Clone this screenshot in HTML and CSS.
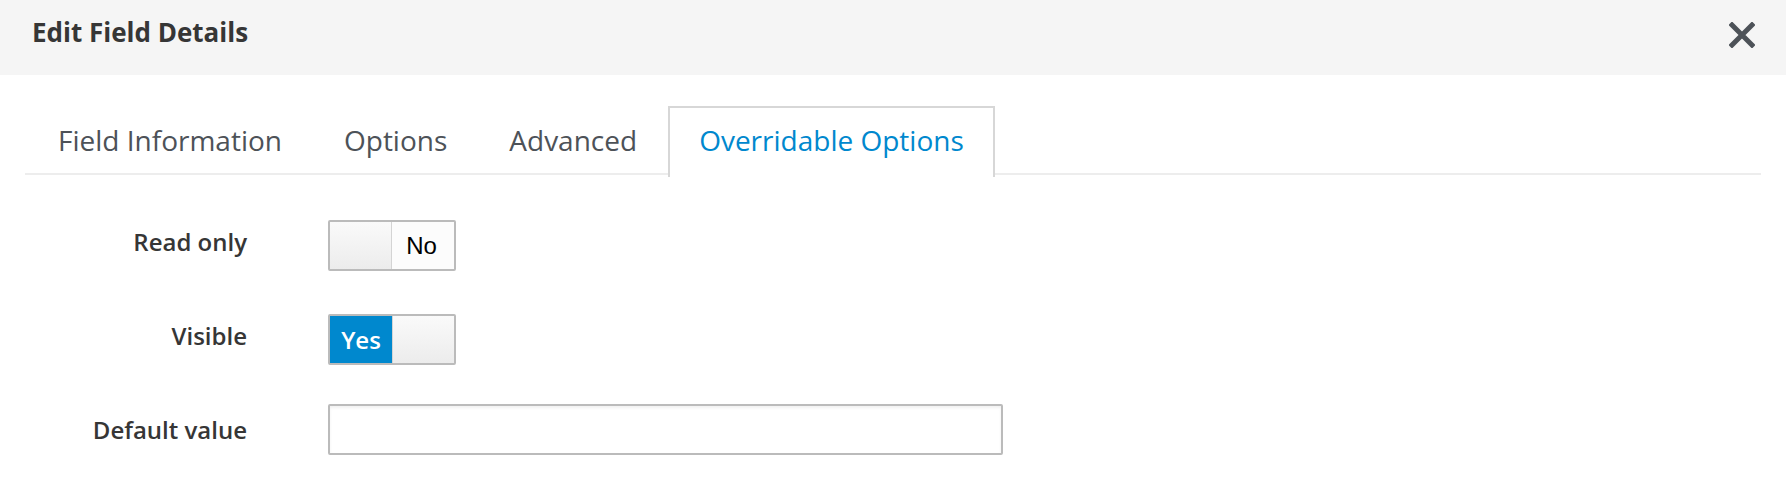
FILE: index.html
```html
<!DOCTYPE html>
<html lang="en">
<head>
<meta charset="utf-8">
<title>Edit Field Details</title>
<link rel="stylesheet" href="styles.css">
</head>
<body>
<div class="modal">
  <div class="modal-header">
    <h4 class="modal-title">Edit Field Details</h4>
    <button class="close" aria-label="Close">
      <svg width="26" height="26" viewBox="0 0 26 26"><path d="M3 3 L23 23 M23 3 L3 23" stroke="#4d5258" stroke-width="5" stroke-linecap="square"/></svg>
    </button>
  </div>
  <div class="modal-body">
    <ul class="nav-tabs">
      <li class="tab">Field Information</li>
      <li class="tab">Options</li>
      <li class="tab">Advanced</li>
      <li class="tab active">Overridable Options</li>
    </ul>
    <div class="form">
      <div class="row row-1">
        <label class="label">Read only</label>
        <div class="switch off">
          <span class="handle"></span>
          <span class="state-no">No</span>
        </div>
      </div>
      <div class="row row-2">
        <label class="label">Visible</label>
        <div class="switch on">
          <span class="state-yes">Yes</span>
          <span class="handle"></span>
        </div>
      </div>
      <div class="row row-3">
        <label class="label">Default value</label>
        <input class="text-input" type="text">
      </div>
    </div>
  </div>
</div>
</body>
</html>
```

FILE: styles.css
```css
* { box-sizing: border-box; }
html, body { margin: 0; padding: 0; background: #fff; }
body { font-family: "Open Sans", "Noto Sans", sans-serif; color: #363636; }

.modal-header {
  height: 75px;
  background: #f5f5f5;
  display: flex;
  justify-content: space-between;
  align-items: flex-start;
  padding: 0 31px 0 32px;
}
.modal-title {
  margin: 0;
  padding-top: 14px;
  font-size: 26px;
  font-weight: 700;
  line-height: 36px;
  color: #363636;
}
.close {
  margin-top: 22px;
  padding: 0;
  border: 0;
  background: none;
  width: 26px;
  height: 26px;
  display: block;
}
.close svg { display: block; }

.modal-body { padding: 31px 25px 0 25px; }

.nav-tabs {
  list-style: none;
  margin: 0;
  padding: 0 0 0 2px;
  display: flex;
  border-bottom: 2px solid #ededed;
  height: 69px;
}
.tab {
  font-size: 28px;
  line-height: 36px;
  color: #4d5258;
  padding: 14px 29px 17px 29px;
  border: 2px solid transparent;
  border-bottom: 0;
  height: 69px;
}
.tab.active {
  color: #0088ce;
  border-color: #d7d7d7;
  background: #fff;
  height: 71px;
}

.form { padding-top: 45px; }
.row {
  display: flex;
  align-items: flex-start;
}
.row-2 { margin-top: 43px; }
.row-3 { margin-top: 39px; }
.label {
  width: 222px;
  margin-right: 81px;
  text-align: right;
  font-size: 24px;
  line-height: 36px;
  font-weight: 600;
  color: #363636;
  padding-top: 4px;
}
.row-3 .label { padding-top: 8px; }

.switch {
  display: flex;
  width: 128px;
  height: 51px;
  border: 2px solid #bbb;
  border-radius: 2px;
  overflow: hidden;
  background: #fff;
}
.switch .handle {
  width: 62px;
  height: 100%;
  background: linear-gradient(#fafafa, #ececec);
}
.switch.off .handle { border-right: 1px solid #d4d4d4; box-shadow: 1px 0 2px rgba(0,0,0,0.08); }
.switch.on .handle { border-left: 1px solid #d4d4d4; flex: 1; }
.state-no {
  flex: 1;
  display: flex;
  align-items: center;
  justify-content: center;
  font-family: "Liberation Sans", Arial, sans-serif;
  font-size: 24px;
  color: #000;
  background: #fcfcfc;
  padding-right: 3px;
}
.state-yes {
  width: 62px;
  display: flex;
  align-items: center;
  justify-content: center;
  background: #0088ce;
  color: #fff;
  font-size: 24px;
  font-weight: 600;
}

.text-input {
  width: 675px;
  height: 51px;
  border: 2px solid #bbb;
  border-radius: 2px;
  box-shadow: inset 0 2px 3px rgba(0,0,0,0.06);
  font-family: inherit;
  font-size: 24px;
  padding: 0 12px;
  background: #fff;
}
```
